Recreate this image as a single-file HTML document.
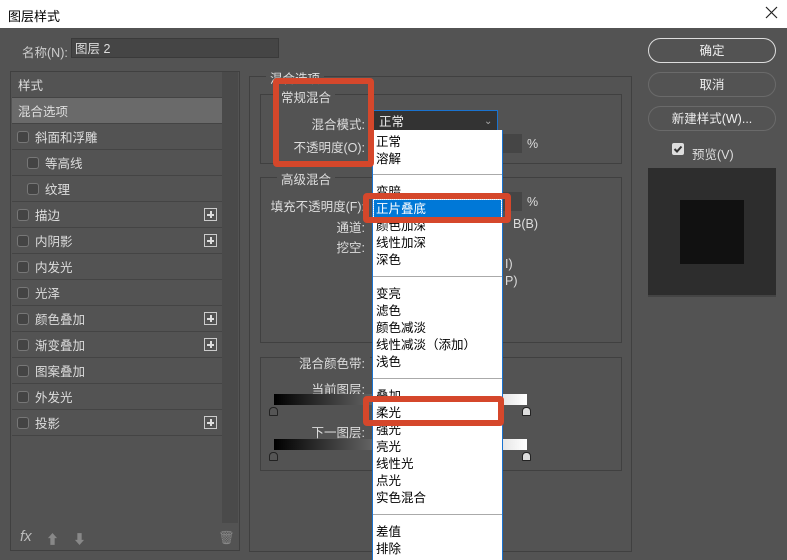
<!DOCTYPE html>
<html><head><meta charset="utf-8"><style>
*{margin:0;padding:0;box-sizing:border-box}
body{width:787px;height:560px;overflow:hidden;background:#535353;font-family:"Liberation Sans","Noto Sans CJK SC",sans-serif;font-size:12.5px;color:#ddd;position:relative}
.a{position:absolute;white-space:nowrap}
.title{left:0;top:0;width:787px;height:28px;background:#fff;color:#000}
.box{position:absolute;border:1px solid #404040}
.row{position:absolute;left:12px;width:210px;height:26px;border-bottom:1px solid #444;line-height:28px}
.cb{position:absolute;top:7px;width:12px;height:12px;border:1px solid #777;border-radius:3px;background:#444}
.plus{position:absolute;left:192px;top:6px;width:13px;height:13px;border:1px solid #ccc}
.plus:before{content:"";position:absolute;left:2px;top:5px;width:7px;height:1.5px;background:#ddd}
.plus:after{content:"";position:absolute;left:5px;top:2px;width:1.5px;height:7px;background:#ddd}
.btn{position:absolute;left:648px;width:128px;height:25px;border-radius:13px;text-align:center;line-height:24px;color:#eee}
.leg{position:absolute;background:#535353;padding:0 4px;color:#ddd}
.lbl{position:absolute;text-align:right;width:120px;color:#ddd}
.list{position:absolute;left:372px;top:130px;width:131px;height:430px;background:#fff;border-left:1px solid #1a73d0;border-right:1px solid #1a73d0;color:#000}
.it{position:absolute;left:3px;height:17px;line-height:19px;font-size:12.5px}
.sep{position:absolute;left:0;width:129px;height:1px;background:#aaa}
.red{position:absolute;border:6px solid #d5472b;border-radius:4px}
.grad{position:absolute;left:274px;width:253px;height:11px;background:linear-gradient(90deg,#000,#fff)}
.tri{position:absolute;width:9px;height:9px;border-radius:4px 4px 1px 1px;border:1px solid #222}
</style></head><body>
<div class="a title"><span class="a" style="left:8px;top:6px;font-size:13px">图层样式</span>
<svg class="a" style="left:765px;top:6px" width="13" height="13"><path d="M1 1L12 12M12 1L1 12" stroke="#222" stroke-width="1.2"/></svg></div>

<span class="a" style="left:22px;top:42px;color:#ccc">名称(N):</span>
<div class="a" style="left:71px;top:38px;width:208px;height:20px;background:#454545;border:1px solid #3a3a3a;padding-left:3px;line-height:20px;color:#ddd">图层 2</div>

<div class="box" style="left:10px;top:71px;width:230px;height:480px"></div>
<div class="a" style="left:222px;top:72px;width:16px;height:451px;background:#4a4a4a"></div>
<div class="row" style="top:72px;padding-left:6px">样式</div>
<div class="row" style="top:98px;padding-left:6px;background:#6a6a6a">混合选项</div>
<div class="row" style="top:124px"><div class="cb" style="left:5px"></div><span class="a" style="left:23px">斜面和浮雕</span></div>
<div class="row" style="top:150px"><div class="cb" style="left:15px"></div><span class="a" style="left:33px">等高线</span></div>
<div class="row" style="top:176px"><div class="cb" style="left:15px"></div><span class="a" style="left:33px">纹理</span></div>
<div class="row" style="top:202px"><div class="cb" style="left:5px"></div><span class="a" style="left:23px">描边</span><div class="plus"></div></div>
<div class="row" style="top:228px"><div class="cb" style="left:5px"></div><span class="a" style="left:23px">内阴影</span><div class="plus"></div></div>
<div class="row" style="top:254px"><div class="cb" style="left:5px"></div><span class="a" style="left:23px">内发光</span></div>
<div class="row" style="top:280px"><div class="cb" style="left:5px"></div><span class="a" style="left:23px">光泽</span></div>
<div class="row" style="top:306px"><div class="cb" style="left:5px"></div><span class="a" style="left:23px">颜色叠加</span><div class="plus"></div></div>
<div class="row" style="top:332px"><div class="cb" style="left:5px"></div><span class="a" style="left:23px">渐变叠加</span><div class="plus"></div></div>
<div class="row" style="top:358px"><div class="cb" style="left:5px"></div><span class="a" style="left:23px">图案叠加</span></div>
<div class="row" style="top:384px"><div class="cb" style="left:5px"></div><span class="a" style="left:23px">外发光</span></div>
<div class="row" style="top:410px"><div class="cb" style="left:5px"></div><span class="a" style="left:23px">投影</span><div class="plus"></div></div>
<span class="a" style="left:20px;top:528px;font-style:italic;font-size:15px;color:#bbb">fx</span>
<span class="a" style="left:46px;top:529px;color:#888;font-size:13px">⬆</span>
<span class="a" style="left:73px;top:529px;color:#888;font-size:13px">⬇</span>
<span class="a" style="left:218px;top:530px;color:#888;font-size:13px">🗑</span>

<div class="box" style="left:249px;top:76px;width:383px;height:476px"></div>
<div class="leg" style="left:266px;top:68px">混合选项</div>
<div class="box" style="left:260px;top:94px;width:362px;height:70px"></div>
<div class="leg" style="left:277px;top:87px">常规混合</div>
<div class="lbl" style="left:245px;top:114px">混合模式:</div>
<div class="lbl" style="left:245px;top:137px">不透明度(O):</div>
<div class="a" style="left:497px;top:134px;width:25px;height:19px;background:#454545"></div>
<span class="a" style="left:527px;top:137px">%</span>
<div class="box" style="left:260px;top:177px;width:362px;height:166px"></div>
<div class="leg" style="left:277px;top:169px">高级混合</div>
<div class="lbl" style="left:245px;top:196px">填充不透明度(F):</div>
<div class="a" style="left:497px;top:192px;width:25px;height:19px;background:#454545"></div>
<span class="a" style="left:527px;top:195px">%</span>
<div class="lbl" style="left:245px;top:217px">通道:</div>
<span class="a" style="left:513px;top:217px">B(B)</span>
<div class="lbl" style="left:245px;top:237px">挖空:</div>
<span class="a" style="left:505px;top:257px">I)</span>
<span class="a" style="left:505px;top:274px">P)</span>
<div class="box" style="left:260px;top:357px;width:362px;height:114px"></div>
<div class="a" style="left:300px;top:350px;width:70px;height:16px;background:#535353"></div>
<div class="lbl" style="left:245px;top:353px">混合颜色带:</div>
<div class="lbl" style="left:245px;top:379px">当前图层:</div>
<div class="grad" style="top:394px"></div>
<div class="tri" style="left:269px;top:407px;background:#555"></div>
<div class="tri" style="left:522px;top:407px;background:#ddd"></div>
<div class="lbl" style="left:245px;top:422px">下一图层:</div>
<div class="grad" style="top:439px"></div>
<div class="tri" style="left:269px;top:452px;background:#555"></div>
<div class="tri" style="left:522px;top:452px;background:#ddd"></div>

<div class="a" style="left:373px;top:110px;width:125px;height:21px;background:#333;border:1px solid #1a73d0;border-bottom:none;padding-left:5px;line-height:22px;color:#eee">正常<span class="a" style="left:110px;top:0;color:#aaa;font-size:10px">⌄</span></div>
<div class="list">
<div class="it" style="top:3px">正常</div>
<div class="it" style="top:20px">溶解</div>
<div class="sep" style="top:44px"></div>
<div class="it" style="top:53px">变暗</div>
<div class="it" style="top:70px;left:1px;width:127px;background:#0078d7;color:#fff;padding-left:2px;outline:1px dotted #cde">正片叠底</div>
<div class="it" style="top:87px">颜色加深</div>
<div class="it" style="top:104px">线性加深</div>
<div class="it" style="top:121px">深色</div>
<div class="sep" style="top:146px"></div>
<div class="it" style="top:155px">变亮</div>
<div class="it" style="top:172px">滤色</div>
<div class="it" style="top:189px">颜色减淡</div>
<div class="it" style="top:206px">线性减淡（添加）</div>
<div class="it" style="top:223px">浅色</div>
<div class="sep" style="top:248px"></div>
<div class="it" style="top:257px">叠加</div>
<div class="it" style="top:274px">柔光</div>
<div class="it" style="top:291px">强光</div>
<div class="it" style="top:308px">亮光</div>
<div class="it" style="top:325px">线性光</div>
<div class="it" style="top:342px">点光</div>
<div class="it" style="top:359px">实色混合</div>
<div class="sep" style="top:384px"></div>
<div class="it" style="top:393px">差值</div>
<div class="it" style="top:410px">排除</div>
</div>

<div class="red" style="left:273px;top:78px;width:101px;height:89px"></div>
<div class="red" style="left:363px;top:193px;width:148px;height:30px"></div>
<div class="red" style="left:363px;top:396px;width:141px;height:30px"></div>

<div class="btn" style="top:38px;border:1.5px solid #ddd">确定</div>
<div class="btn" style="top:72px;border:1px solid #6a6a6a">取消</div>
<div class="btn" style="top:106px;border:1px solid #6a6a6a">新建样式(W)...</div>
<div class="a" style="left:672px;top:143px;width:12px;height:12px;background:#ddd;border-radius:2px"><svg width="12" height="12" style="position:absolute;left:0;top:0"><path d="M2.5 6L5 8.5L9.5 3.5" stroke="#333" stroke-width="2" fill="none"/></svg></div>
<span class="a" style="left:692px;top:144px">预览(V)</span>
<div class="a" style="left:648px;top:168px;width:128px;height:129px;background:#2d2d2d;border-bottom:2px solid #444"></div>
<div class="a" style="left:680px;top:200px;width:64px;height:64px;background:#111"></div>
</body></html>
